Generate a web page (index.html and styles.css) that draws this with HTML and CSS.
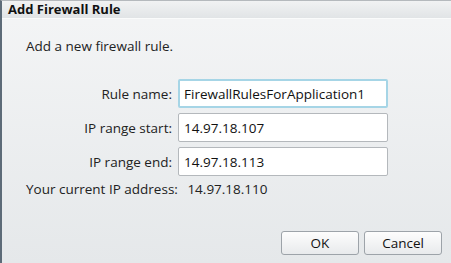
FILE: index.html
```html
<!DOCTYPE html>
<html lang="en">
<head>
    <meta charset="UTF-8">
    <title>Add Firewall Rule</title>
    <link rel="stylesheet" href="styles.css">
</head>
<body>
    <div class="dialog">
        <div class="titlebar">Add Firewall Rule</div>
        <div class="content">
            <p class="intro">Add a new firewall rule.</p>
            <div class="form-grid">
                <label for="ruleName">Rule name:</label>
                <input type="text" id="ruleName" class="focused" value="FirewallRulesForApplication1">
                <label for="ipStart">IP range start:</label>
                <input type="text" id="ipStart" value="14.97.18.107">
                <label for="ipEnd">IP range end:</label>
                <input type="text" id="ipEnd" value="14.97.18.113">
            </div>
            <div class="current-ip">
                <span>Your current IP address:</span>
                <span class="ip-value">14.97.18.110</span>
            </div>
        </div>
        <div class="buttons">
            <button>OK</button>
            <button>Cancel</button>
        </div>
    </div>
</body>
</html>
```
FILE: styles.css
```css
body {
    margin: 0;
    font-family: "Open Sans", "Noto Sans", sans-serif;
    font-size: 13.5px;
    color: #222;
    background: #e6e9eb;
}
.dialog {
    width: 451px;
    height: 263px;
    box-sizing: border-box;
    border-top: 1px solid #b5b9bd;
    display: flex;
    flex-direction: column;
    background: linear-gradient(#f4f5f6, #e5e8ea);
    border-left: 2px solid #5d6b78;
}
.titlebar {
    height: 17px;
    line-height: 17px;
    padding-left: 6px;
    font-weight: bold;
    font-size: 13px;
    color: #111;
    background: linear-gradient(#f1f2f3, #e1e4e6);
    border-bottom: 1px solid #fafbfb;
}
.content {
    flex: 1;
    padding: 0 0 0 24px;
}
.intro {
    margin: 17px 0 0;
    line-height: 20px;
}
.form-grid {
    display: grid;
    grid-template-columns: 146px 210px;
    column-gap: 6px;
    row-gap: 5px;
    margin-top: 23px;
    align-items: center;
}
.form-grid label {
    text-align: right;
}
.form-grid input {
    height: 29px;
    box-sizing: border-box;
    border: 1px solid #b4b8bc;
    border-radius: 2px;
    padding: 0 5px;
    font-family: inherit;
    font-size: 13.5px;
    color: #111;
    background: #fff;
}
.form-grid input.focused {
    border: 2px solid #a6d5e6;
    padding: 0 4px;
}
.current-ip {
    margin-top: 2px;
    line-height: 22px;
}
.ip-value {
    margin-left: 6px;
}
.buttons {
    display: flex;
    justify-content: flex-end;
    gap: 5px;
    padding: 0 9px 8px 0;
}
.buttons button {
    width: 78px;
    height: 24px;
    font-family: inherit;
    font-size: 13.5px;
    color: #111;
    border: 1px solid #9da3a9;
    border-radius: 3px;
    background: linear-gradient(#fdfdfd, #e8eaec);
}
```
